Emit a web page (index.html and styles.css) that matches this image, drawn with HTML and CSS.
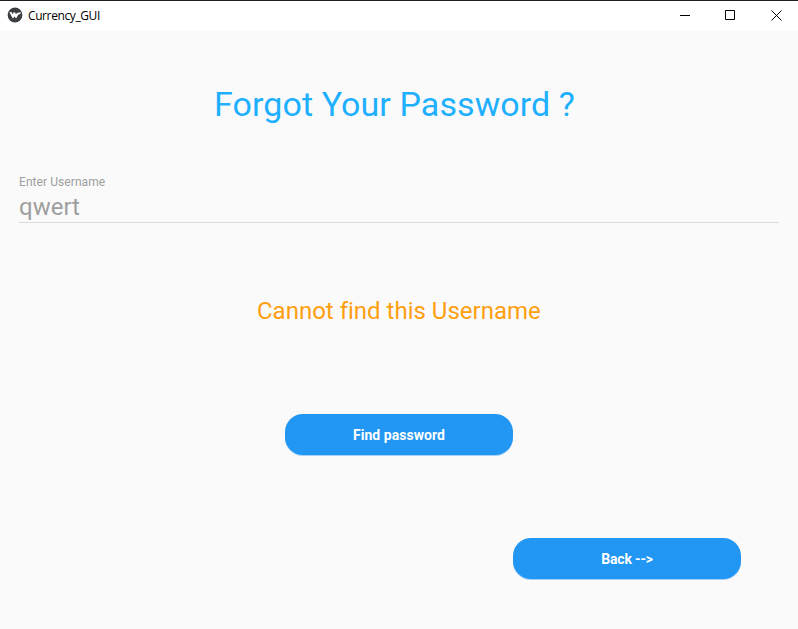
FILE: index.html
```html
<!DOCTYPE html>
<html lang="en">
<head>
<meta charset="utf-8">
<title>Currency_GUI</title>
<link rel="stylesheet" href="styles.css">
</head>
<body>
<header class="titlebar">
  <svg class="logo" viewBox="0 0 16 16"><circle cx="8" cy="8" r="7.4" fill="#3c3f41"/><path d="M2.300 5l2.500.2 1 2.200.8-2.200 1.500.3.8 1.600L10.600 5.800l3.600-.5-1 1.700-1.700.5-2.500 4-1.300-2-1.900 2z" fill="#fff"/></svg>
  <span class="app-name">Currency_GUI</span>
  <div class="controls">
    <svg viewBox="0 0 11 11"><path d="M0 5.500H10"/></svg>
    <svg viewBox="0 0 11 11"><path d="M.5.5h9v9h-9z"/></svg>
    <svg class="close" viewBox="0 0 11 11"><path d="M.5.5l10 10M10.500.5l-10 10"/></svg>
  </div>
</header>
<main class="screen">
  <h1 class="title"><span>Forgot Your Password ?</span></h1>
  <div class="field">
    <label class="hint">Enter Username</label>
    <div class="value">qwert</div>
  </div>
  <p class="message"><span>Cannot find this Username</span></p>
  <button class="button find"><span>Find password</span></button>
  <button class="button back"><span>Back --&gt;</span></button>
</main>
</body>
</html>
```
FILE: styles.css
```css
* { box-sizing: border-box; }
body { margin: 0; height: 629px; background: #fafafa; font-family: Roboto, sans-serif; overflow: hidden; }
.titlebar { height: 31px; display: flex; align-items: center; background: #fff; border-top: 1px solid #231f20; padding: 0 0 2px 7px; }
.logo { width: 16px; height: 16px; }
.app-name { margin-left: 5px; font: 12px "Open Sans", sans-serif; letter-spacing: -0.4px; color: #000; }
.controls { margin-left: auto; display: flex; gap: 34px; padding-right: 16px; }
.controls svg { width: 11px; height: 11px; fill: none; stroke: #000; }
.controls .close { margin-left: 1px; }
.screen { display: flex; flex-direction: column; }
.title { margin: 53px 0 0 214px; font-size: 34px; line-height: 40px; font-weight: 400; letter-spacing: 0.08px; color: #1eb0ff; }
.field { margin: 50px 19px 0; height: 49px; border-bottom: 1px solid #dcdcdc; }
.hint { display: block; font-size: 12px; line-height: 16px; letter-spacing: 0.07px; color: #9e9e9e; }
.value { font-size: 24px; line-height: 28px; margin-top: 3px; color: #9e9e9e; }
.message { margin: 74px 0 0 257px; font-size: 24px; line-height: 28px; font-variant-ligatures: none; color: #ff9f10; }
.button { width: 228px; height: 41px; border: 0; border-radius: 18px; background: #2196f3; box-shadow: 0 1px 0 #a5d0f7; color: #fff; font: 700 14px Roboto, sans-serif; padding: 0; }
.find { margin: 89px 0 0 285px; letter-spacing: 0.05px; }
.back { margin: 83px 0 0 513px; letter-spacing: -0.15px; }
```
